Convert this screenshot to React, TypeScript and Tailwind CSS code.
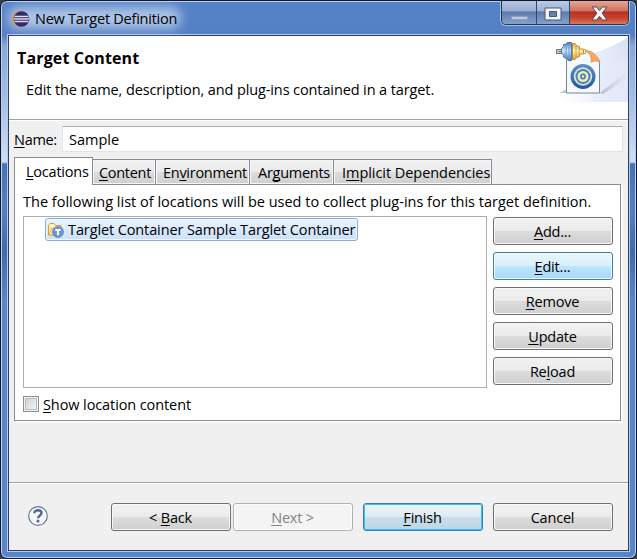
import type { ReactNode } from "react";
import { clsx } from "clsx";

type ButtonTone = "normal" | "hot" | "default" | "disabled";

type PushButtonProps = {
  children: ReactNode;
  tone?: ButtonTone;
};

const toneClasses: Record<ButtonTone, string> = {
  normal:
    "border-[#707070] text-black bg-[linear-gradient(#f2f2f2_0%,#ebebeb_48%,#dddddd_50%,#cfcfcf_100%)] shadow-[inset_0_0_0_1px_#f8f8f8]",
  hot: "border-[#3c7fb1] text-black bg-[linear-gradient(#eaf6fd_0%,#d9f0fc_48%,#bee6fd_50%,#a7d9f5_100%)] shadow-[inset_0_0_0_1px_#f0faff]",
  default:
    "border-[#3c7fb1] text-black bg-[linear-gradient(#eef5f9_0%,#deebf2_48%,#c9dfea_50%,#bcd6e3_100%)] shadow-[inset_0_0_0_1px_#35c4f0]",
  disabled: "border-[#adb2b5] text-[#838383] bg-[#f4f4f4] shadow-[inset_0_0_0_1px_#fcfcfc]",
};

function PushButton({ children, tone = "normal" }: PushButtonProps) {
  return (
    <button
      className={clsx(
        "flex h-7 w-[120px] shrink-0 items-center justify-center rounded-[3px] border pt-0.5 pr-px tracking-[-0.2px] whitespace-pre",
        toneClasses[tone],
      )}
    >
      {children}
    </button>
  );
}

/* Underlined mnemonic letter */
function Key({ children }: { children: string }) {
  return (
    <span className="underline decoration-1 underline-offset-[1.5px] [text-decoration-skip-ink:none]">
      {children}
    </span>
  );
}

function EclipseIcon() {
  return (
    <svg width="18" height="18" viewBox="0 0 18 18" className="relative">
      <circle cx="8.2" cy="9" r="8" fill="#e8943a" />
      <circle cx="9.500" cy="9" r="7.800" fill="#352a68" />
      <path d="M2.500 6.500h14M2 9h15M2.500 11.500h14" stroke="#dcdaf0" strokeWidth="1.400" />
    </svg>
  );
}

function TargetBanner() {
  return (
    <svg width="73" height="66" viewBox="0 0 73 66" className="shrink-0">
      <defs>
        <linearGradient id="sweep" x1="0" y1="0.6" x2="1" y2="0.4">
          <stop offset="0" stopColor="#fff" />
          <stop offset="1" stopColor="#dbe4f5" />
        </linearGradient>
        <linearGradient id="ring" x1="0" y1="0" x2="0" y2="1">
          <stop offset="0" stopColor="#5f8fce" />
          <stop offset="1" stopColor="#2456a0" />
        </linearGradient>
        <linearGradient id="cast" x1="0" y1="0" x2="1" y2="0">
          <stop offset="0" stopColor="#aaa5ba" stopOpacity="0.75" />
          <stop offset="1" stopColor="#c8c8dc" stopOpacity="0" />
        </linearGradient>
        <linearGradient id="steel" x1="0" y1="0" x2="0" y2="1">
          <stop offset="0" stopColor="#4e7db8" />
          <stop offset="0.45" stopColor="#d5e8fc" />
          <stop offset="1" stopColor="#3f6fae" />
        </linearGradient>
        <linearGradient id="brass" x1="0" y1="0" x2="0" y2="1">
          <stop offset="0" stopColor="#e0ad40" />
          <stop offset="0.45" stopColor="#fff6b8" />
          <stop offset="1" stopColor="#d79c2e" />
        </linearGradient>
      </defs>
      <path d="M73 1C62 8 52 13 37 18L0 61v5h73z" fill="url(#sweep)" />
      <path d="M73 21C55 26 47 35 38 51v15h35z" fill="#e4eaf8" opacity="0.6" />
      <path d="M45 57L73 35v7L48 58z" fill="url(#cast)" />
      <path d="M4 57l8-4v4z" fill="#c5c5d2" />
      <path d="M11.500 15.500h22l11 11v30.500h-33z" fill="#f5f8fc" />
      <path d="M11.500 24v33h33V25" fill="none" stroke="#6f8c8e" />
      <path d="M30 14.500c6-.5 13 4.500 15 12-3-2-6-2-9 0 1-5-1-9-6-12z" fill="#f4a864" stroke="#d98b4a" strokeWidth="0.700" />
      <circle cx="28" cy="40.500" r="12.500" fill="url(#ring)" />
      <circle cx="28" cy="40.500" r="9.200" fill="#d9e9c8" />
      <circle cx="28" cy="40.500" r="7.500" fill="#4d80bd" />
      <circle cx="28" cy="40.500" r="5.500" fill="#e5edba" />
      <circle cx="28" cy="40.500" r="2.900" fill="#4a7aba" />
      <circle cx="28" cy="40.500" r="1.200" fill="#edf3d0" />
      <path d="M1.500 13.500h5v4h-5zM3.500 15.500h4" fill="#e2ca79" stroke="#5981af" />
      <path d="M6.500 12.500L8.500 10.500V8.500H11V7.500L12.500 6.500H16.500V24.500H13L11 22.500 8.500 21V19L6.500 17.500z" fill="url(#steel)" stroke="#4876ae" />
      <path d="M11 9.500v12M14 8v15.500" stroke="#6c99cf" />
      <path d="M17.500 7.500H20L21.500 9.500 24.500 10.500V13H28.500V18H24.500V20.500L21.500 21.500 20 23.500H17.500z" fill="url(#brass)" stroke="#c28d2b" />
      <path d="M21 10v11M24 12v7" stroke="#d5a03c" />
      <path d="M28 13.500h2.500v4H28" fill="none" stroke="#d5a03c" />
    </svg>
  );
}

function TargletIcon() {
  return (
    <svg width="16" height="16" viewBox="0 0 16 16" className="shrink-0">
      <path d="M.5 13V3.500L2 1.500h4l1.500 2H13V13z" fill="#fff1bf" stroke="#d99b3d" />
      <path d="M1 13l2.500-7H14v7z" fill="#fae3a0" stroke="#dca753" strokeWidth="0.800" />
      <circle cx="10" cy="10" r="5.500" fill="#6b96d4" stroke="#5681bf" strokeWidth="0.700" />
      <path d="M7.300 8h5.400M10 8v5.200" stroke="#fff" strokeWidth="1.900" />
    </svg>
  );
}

function HelpIcon() {
  return (
    <svg width="20" height="20" viewBox="0 0 20 20">
      <circle cx="10" cy="10" r="9.300" fill="#f6f7fa" stroke="#65789b" strokeWidth="1.200" />
      <path d="M6.300 7.300C6.300 3 13.500 3.500 13.500 7c0 2.500-3.400 2.400-3.400 5.200" fill="none" stroke="#526a98" strokeWidth="2.400" />
      <circle cx="10" cy="15" r="1.500" fill="#526a98" />
    </svg>
  );
}

function WindowControls() {
  return (
    <div className="flex h-6 w-[128px] overflow-hidden rounded-b-[5px] border border-t-0 border-[#26355a] shadow-[0_0_0_1px_#a9c0e5]">
      <div className="flex w-[35px] items-center justify-center border-r border-[#34456f] bg-[linear-gradient(#b4c5e2_0%,#99aed2_42%,#5f7aa9_48%,#84a0cd_100%)]">
        <svg width="17" height="4" className="mt-2.5">
          <path d="M.5.500h16v3H.5z" fill="#bccae2" stroke="#8a9ec2" />
        </svg>
      </div>
      <div className="flex w-[33px] items-center justify-center border-r border-[#34456f] bg-[linear-gradient(#b9cbe7_0%,#9cb2d7_42%,#5f7aa9_48%,#84a3d2_100%)]">
        <svg width="18" height="14" className="mt-0.5">
          <path d="M1 1h16v12H1zM5.500 4.500v5h7v-5z" fill="#f4f4f6" fillRule="evenodd" stroke="#4b5875" />
        </svg>
      </div>
      <div className="flex flex-1 items-center justify-center bg-[linear-gradient(#e5a797_0%,#d2715f_42%,#b9301f_48%,#c4452f_75%,#d77a5c_100%)]">
        <svg width="17" height="15" className="mt-0.5">
          <path d="M1 1h4.500l3 3.500 3-3.500H16l-4.800 6.200L16 14h-4.500l-3-3.600-3 3.600H1l4.800-6.800z" fill="#f4f4f5" stroke="#5a4752" />
        </svg>
      </div>
    </div>
  );
}

type TabItem = {
  label: ReactNode;
  className: string;
};

const tabs: TabItem[] = [
  { label: <><Key>C</Key>ontent</>, className: "w-[63px] pl-[6px] tracking-[-0.3px]" },
  { label: <>En<Key>v</Key>ironment</>, className: "w-[94px] pl-[7px] tracking-[-0.28px]" },
  { label: <>Ar<Key>g</Key>uments</>, className: "w-[84px] pl-[8px] tracking-[-0.27px]" },
  { label: <>I<Key>m</Key>plicit Dependencies</>, className: "w-[158px] pl-[8px] tracking-[-0.05px]" },
];

function TabStrip() {
  return (
    <div className="relative z-10 -mb-px flex h-7 items-end whitespace-nowrap">
      <div className="flex h-7 w-[79px] items-center border border-b-0 border-[#898c95] bg-white pl-[11px] tracking-[-0.22px]">
        <span><Key>L</Key>ocations</span>
      </div>
      {tabs.map((tab, i) => (
        <div
          key={i}
          className={clsx(
            "flex h-[26px] items-center border border-l-0 border-[#898c95] bg-[linear-gradient(#f2f2f2_0%,#ebebeb_48%,#dddddd_50%,#cfcfcf_100%)] pt-px shadow-[inset_0_0_0_1px_#f6f6f6]",
            tab.className,
          )}
        >
          <span>{tab.label}</span>
        </div>
      ))}
    </div>
  );
}

function LocationsPanel() {
  return (
    <div className="h-[237px] w-[607px] border border-[#898c95] bg-white pt-[7px] pr-1.5 pl-2 shadow-[2px_2px_0_#fafafa]">
      <p className="h-6 leading-5 whitespace-nowrap">
        The following list of locations will be used to collect plug-ins for this target definition.
      </p>
      <div className="flex gap-1.5">
        <div className="h-[172px] w-[464px] shrink-0 border border-[#abadb3] pt-px pl-[21px]">
          <div className="flex h-[23px] w-[313px] items-center gap-1 overflow-hidden rounded-[3px] border border-[#84acdd] bg-linear-to-b from-[#eaf4ff] to-[#c9e0fc] pl-0.5 whitespace-nowrap shadow-[inset_0_0_0_1px_#f2f8ff]">
            <TargletIcon />
            <span className="tracking-[-0.11px]">Targlet Container Sample Targlet Container</span>
          </div>
        </div>
        <div className="flex flex-col gap-[7px] pt-px">
          <PushButton><Key>A</Key>dd...</PushButton>
          <PushButton tone="hot"><Key>E</Key>dit...</PushButton>
          <PushButton><Key>R</Key>emove</PushButton>
          <PushButton><Key>U</Key>pdate</PushButton>
          <PushButton>Re<Key>l</Key>oad</PushButton>
        </div>
      </div>
      <label className="mt-[7px] flex items-center gap-1">
        <span className="flex size-4 items-center justify-center border border-[#8e8f8f] bg-[#f4f4f4]">
          <span className="size-3 border border-[#b8bcc2] bg-linear-to-br from-[#cdd1d6] to-[#f6f6f6]" />
        </span>
        <span className="pt-0.5 leading-4 tracking-[-0.1px]"><Key>S</Key>how location content</span>
      </label>
    </div>
  );
}

function TitleBar() {
  return (
    <header className="flex h-[34px] justify-between">
      <div className="relative flex h-[34px] items-center gap-[5px] pt-0.5 pl-1">
        <div className="absolute inset-y-1.5 -right-1 left-0 rounded-full bg-[#c6d6ef]/80 blur-[6px]" />
        <EclipseIcon />
        <span className="relative tracking-[-0.24px]">New Target Definition</span>
      </div>
      <WindowControls />
    </header>
  );
}

export default function App() {
  return (
    <div className="h-[559px] w-[637px] overflow-hidden bg-[#3c3c44] font-['Open_Sans','Noto_Sans',sans-serif] text-[14.5px] text-black">
      <div className="flex h-[559px] flex-col overflow-hidden rounded-[7px] border border-[#10172b] bg-[linear-gradient(#5583c7_0px,#5380c4_34px,#88a8d9_45px,#a5bfe5_100px,#d0dff2_161px,#4473b9_163px,#557fc2_210px,#3e6bae_250px,#5a86c9_300px,#5785c9_100%)] px-[7px] pb-[7px] shadow-[inset_0_0_0_1px_#bdd2f0]">
        <TitleBar />
        <main className="flex h-[516px] w-[621px] flex-col border border-[#2c3e66] bg-[#f0f0f0] shadow-[0_0_0_1px_#b5caeb]">
          <section className="flex h-[84px] shrink-0 justify-between border-b border-[#a0a0a0] bg-white pl-2">
            <div className="pt-3 whitespace-nowrap">
              <h1 className="text-base leading-5 font-bold tracking-[0.15px]">Target Content</h1>
              <p className="mt-3 pl-[9px] leading-5 tracking-[-0.11px]">
                Edit the name, description, and plug-ins contained in a target.
              </p>
            </div>
            <TargetBanner />
          </section>
          <section className="h-[362px] shrink-0 border-t border-white px-[5px] pt-[5px]">
            <div className="flex items-center gap-[5px]">
              <span className="w-[43px] pt-px tracking-[-0.3px]"><Key>N</Key>ame:</span>
              <div className="flex h-[26px] w-[561px] items-center border border-[#e2e3ea] border-t-[#abadb3] bg-white pt-px pl-1.5">
                Sample
              </div>
            </div>
            <div className="mt-[5px]">
              <TabStrip />
              <LocationsPanel />
            </div>
          </section>
          <footer className="flex flex-1 border-t border-[#a0a0a0]">
            <div className="flex flex-1 items-start border-t border-white pt-[19px] pl-[19px]">
              <div className="pt-[3px]">
                <HelpIcon />
              </div>
              <div className="ml-[63px] flex gap-[2px]">
                <PushButton>&lt; <Key>B</Key>ack</PushButton>
                <PushButton tone="disabled"><Key>N</Key>ext &gt;</PushButton>
              </div>
              <div className="ml-[10px] flex gap-[10px]">
                <PushButton tone="default"><Key>F</Key>inish</PushButton>
                <PushButton>Cancel</PushButton>
              </div>
            </div>
          </footer>
        </main>
      </div>
    </div>
  );
}
